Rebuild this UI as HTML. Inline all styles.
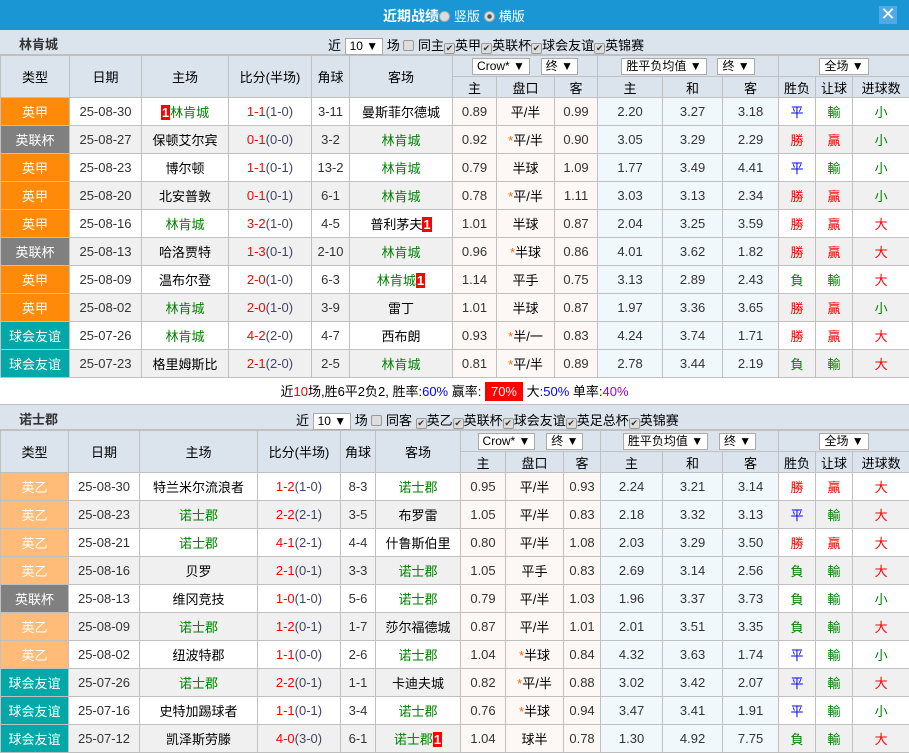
<!DOCTYPE html>
<html><head><meta charset="utf-8"><style>
*{margin:0;padding:0;box-sizing:border-box}
body{width:909px;height:754px;overflow:hidden;background:#fff;font-family:"Liberation Sans","Noto Sans CJK SC",sans-serif;font-size:13px;color:#000}
.top{height:30px;background:#1a96d4;color:#fff;font-weight:bold;font-size:14px;position:relative}
.top .t{position:absolute;left:383px;top:6px}
.top .t span{font-weight:normal;font-size:13px}
.rd{display:inline-block;width:11px;height:11px;border-radius:50%;background:#ddd;border:1px solid #aaa;vertical-align:-1px}
.rd.on{background:radial-gradient(#555 30%,#ddd 40%)}
.x{position:absolute;left:879px;top:6px;width:18px;height:18px;background:#4fa9e6;color:#fff;font-size:18px;line-height:17px;text-align:center;font-weight:normal}
.bar{height:25px;background:#dbe3ec;position:relative;border-bottom:1px solid #c0c0c0}
.bar b{position:absolute;left:19px;top:4px;font-size:13px;color:#333}
.bar .f{position:absolute;top:5px;font-size:13px;color:#000;white-space:nowrap}
.sel{display:inline-block;background:#fff;border:1px solid #aaa;padding:0 4px;height:17px;line-height:15px;font-size:12px;vertical-align:middle}
.cb{display:inline-block;width:11px;height:11px;border:1px solid #999;background:#ddd;border-radius:2px;vertical-align:-1px;font-size:9px;line-height:9px;text-align:center;color:#333}
table{border-collapse:collapse;table-layout:fixed;width:909px}
td{border:1px solid #c0c0c0;text-align:center;height:28px;font-size:13px;white-space:nowrap;overflow:hidden;padding:0}
tr.h td{background:#dbe3ec;height:21px}
tr.h td.hh{height:42px}
tr.e td{background:#f0f0f0}
td.a{background:#fdf8f5!important;color:#333}
td.o{background:#f0f8fc!important;color:#333}
td.d{color:#333}
.t1{background:#ff8a0a!important;color:#fff}
.t2{background:#808080!important;color:#fff}
.t3{background:#00a8a8!important;color:#fff}
.t4{background:#ffbb77!important;color:#fff}
.g{color:#008000}.r{color:#f00}.b{color:#00f}span.s{color:#446}
.n{background:#f00;color:#fff;font-weight:bold;padding:0 1px}
.st{color:#f60}
.sum{height:27px;text-align:center;line-height:27px;font-size:13px;border-bottom:1px solid #c0c0c0}
.sum .p{background:#f00;color:#fff;padding:2px 6px}
</style></head><body>
<div class="top"><div class="t">近期战绩<span class="rd"></span> <span>竖版</span> <span class="rd on"></span> <span>横版</span></div><div class="x">✕</div></div>
<div class="bar"><b>林肯城</b><div class="f" style="left:328px">近 <span class="sel">10 ▼</span> 场 <span class="cb"></span> 同主<span class="cb">✔</span>英甲<span class="cb">✔</span>英联杯<span class="cb">✔</span>球会友谊<span class="cb">✔</span>英锦赛</div></div>
<table>
<colgroup><col style="width:69px"><col style="width:72px"><col style="width:87px"><col style="width:83px"><col style="width:38px"><col style="width:103px"><col style="width:44px"><col style="width:58px"><col style="width:43px"><col style="width:65px"><col style="width:60px"><col style="width:56px"><col style="width:37px"><col style="width:37px"><col style="width:57px"></colgroup>
<tr class="h"><td rowspan="2" class="hh">类型</td><td rowspan="2">日期</td><td rowspan="2">主场</td><td rowspan="2">比分(半场)</td><td rowspan="2">角球</td><td rowspan="2">客场</td><td colspan="3"><span class="sel">Crow* ▼</span> &nbsp; <span class="sel">终 ▼</span></td><td colspan="3"><span class="sel">胜平负均值 ▼</span> &nbsp; <span class="sel">终 ▼</span></td><td colspan="3"><span class="sel">全场 ▼</span></td></tr>
<tr class="h"><td>主</td><td>盘口</td><td>客</td><td>主</td><td>和</td><td>客</td><td>胜负</td><td>让球</td><td>进球数</td></tr>
<tr><td class="t1">英甲</td><td class="d">25-08-30</td><td><span class="n">1</span><span class="g">林肯城</span></td><td><span class="r">1-1</span><span class="s">(1-0)</span></td><td class="d">3-11</td><td>曼斯菲尔德城</td><td class="a">0.89</td><td class="a" style="color:#000">平/半</td><td class="a">0.99</td><td class="o">2.20</td><td class="o">3.27</td><td class="o">3.18</td><td class="b">平</td><td class="g">輸</td><td class="g">小</td></tr>
<tr class="e"><td class="t2">英联杯</td><td class="d">25-08-27</td><td>保顿艾尔宾</td><td><span class="r">0-1</span><span class="s">(0-0)</span></td><td class="d">3-2</td><td class="g">林肯城</td><td class="a">0.92</td><td class="a" style="color:#000"><span class="st">*</span>平/半</td><td class="a">0.90</td><td class="o">3.05</td><td class="o">3.29</td><td class="o">2.29</td><td class="r">勝</td><td class="r">贏</td><td class="g">小</td></tr>
<tr><td class="t1">英甲</td><td class="d">25-08-23</td><td>博尔顿</td><td><span class="r">1-1</span><span class="s">(0-1)</span></td><td class="d">13-2</td><td class="g">林肯城</td><td class="a">0.79</td><td class="a" style="color:#000">半球</td><td class="a">1.09</td><td class="o">1.77</td><td class="o">3.49</td><td class="o">4.41</td><td class="b">平</td><td class="g">輸</td><td class="g">小</td></tr>
<tr class="e"><td class="t1">英甲</td><td class="d">25-08-20</td><td>北安普敦</td><td><span class="r">0-1</span><span class="s">(0-1)</span></td><td class="d">6-1</td><td class="g">林肯城</td><td class="a">0.78</td><td class="a" style="color:#000"><span class="st">*</span>平/半</td><td class="a">1.11</td><td class="o">3.03</td><td class="o">3.13</td><td class="o">2.34</td><td class="r">勝</td><td class="r">贏</td><td class="g">小</td></tr>
<tr><td class="t1">英甲</td><td class="d">25-08-16</td><td class="g">林肯城</td><td><span class="r">3-2</span><span class="s">(1-0)</span></td><td class="d">4-5</td><td>普利茅夫<span class="n">1</span></td><td class="a">1.01</td><td class="a" style="color:#000">半球</td><td class="a">0.87</td><td class="o">2.04</td><td class="o">3.25</td><td class="o">3.59</td><td class="r">勝</td><td class="r">贏</td><td class="r">大</td></tr>
<tr class="e"><td class="t2">英联杯</td><td class="d">25-08-13</td><td>哈洛贾特</td><td><span class="r">1-3</span><span class="s">(0-1)</span></td><td class="d">2-10</td><td class="g">林肯城</td><td class="a">0.96</td><td class="a" style="color:#000"><span class="st">*</span>半球</td><td class="a">0.86</td><td class="o">4.01</td><td class="o">3.62</td><td class="o">1.82</td><td class="r">勝</td><td class="r">贏</td><td class="r">大</td></tr>
<tr><td class="t1">英甲</td><td class="d">25-08-09</td><td>温布尔登</td><td><span class="r">2-0</span><span class="s">(1-0)</span></td><td class="d">6-3</td><td><span class="g">林肯城</span><span class="n">1</span></td><td class="a">1.14</td><td class="a" style="color:#000">平手</td><td class="a">0.75</td><td class="o">3.13</td><td class="o">2.89</td><td class="o">2.43</td><td class="g">負</td><td class="g">輸</td><td class="r">大</td></tr>
<tr class="e"><td class="t1">英甲</td><td class="d">25-08-02</td><td class="g">林肯城</td><td><span class="r">2-0</span><span class="s">(1-0)</span></td><td class="d">3-9</td><td>雷丁</td><td class="a">1.01</td><td class="a" style="color:#000">半球</td><td class="a">0.87</td><td class="o">1.97</td><td class="o">3.36</td><td class="o">3.65</td><td class="r">勝</td><td class="r">贏</td><td class="g">小</td></tr>
<tr><td class="t3">球会友谊</td><td class="d">25-07-26</td><td class="g">林肯城</td><td><span class="r">4-2</span><span class="s">(2-0)</span></td><td class="d">4-7</td><td>西布朗</td><td class="a">0.93</td><td class="a" style="color:#000"><span class="st">*</span>半/一</td><td class="a">0.83</td><td class="o">4.24</td><td class="o">3.74</td><td class="o">1.71</td><td class="r">勝</td><td class="r">贏</td><td class="r">大</td></tr>
<tr class="e"><td class="t3">球会友谊</td><td class="d">25-07-23</td><td>格里姆斯比</td><td><span class="r">2-1</span><span class="s">(2-0)</span></td><td class="d">2-5</td><td class="g">林肯城</td><td class="a">0.81</td><td class="a" style="color:#000"><span class="st">*</span>平/半</td><td class="a">0.89</td><td class="o">2.78</td><td class="o">3.44</td><td class="o">2.19</td><td class="g">負</td><td class="g">輸</td><td class="r">大</td></tr>
</table>
<div class="sum">近<span class="r">10</span>场,胜6平2负2, 胜率:<span class="b">60%</span> 赢率: <span class="p">70%</span> 大:<span class="b">50%</span> 单率:<span class="b" style="color:#90c">40%</span></div>
<div class="bar"><b>诺士郡</b><div class="f" style="left:296px">近 <span class="sel">10 ▼</span> 场 <span class="cb"></span> 同客 <span class="cb">✔</span>英乙<span class="cb">✔</span>英联杯<span class="cb">✔</span>球会友谊<span class="cb">✔</span>英足总杯<span class="cb">✔</span>英锦赛</div></div>
<table>
<colgroup><col style="width:68px"><col style="width:71px"><col style="width:118px"><col style="width:83px"><col style="width:35px"><col style="width:85px"><col style="width:45px"><col style="width:58px"><col style="width:37px"><col style="width:62px"><col style="width:60px"><col style="width:56px"><col style="width:37px"><col style="width:37px"><col style="width:57px"></colgroup>
<tr class="h"><td rowspan="2" class="hh">类型</td><td rowspan="2">日期</td><td rowspan="2">主场</td><td rowspan="2">比分(半场)</td><td rowspan="2">角球</td><td rowspan="2">客场</td><td colspan="3"><span class="sel">Crow* ▼</span> &nbsp; <span class="sel">终 ▼</span></td><td colspan="3"><span class="sel">胜平负均值 ▼</span> &nbsp; <span class="sel">终 ▼</span></td><td colspan="3"><span class="sel">全场 ▼</span></td></tr>
<tr class="h"><td>主</td><td>盘口</td><td>客</td><td>主</td><td>和</td><td>客</td><td>胜负</td><td>让球</td><td>进球数</td></tr>
<tr><td class="t4">英乙</td><td class="d">25-08-30</td><td>特兰米尔流浪者</td><td><span class="r">1-2</span><span class="s">(1-0)</span></td><td class="d">8-3</td><td class="g">诺士郡</td><td class="a">0.95</td><td class="a" style="color:#000">平/半</td><td class="a">0.93</td><td class="o">2.24</td><td class="o">3.21</td><td class="o">3.14</td><td class="r">勝</td><td class="r">贏</td><td class="r">大</td></tr>
<tr class="e"><td class="t4">英乙</td><td class="d">25-08-23</td><td class="g">诺士郡</td><td><span class="r">2-2</span><span class="s">(2-1)</span></td><td class="d">3-5</td><td>布罗雷</td><td class="a">1.05</td><td class="a" style="color:#000">平/半</td><td class="a">0.83</td><td class="o">2.18</td><td class="o">3.32</td><td class="o">3.13</td><td class="b">平</td><td class="g">輸</td><td class="r">大</td></tr>
<tr><td class="t4">英乙</td><td class="d">25-08-21</td><td class="g">诺士郡</td><td><span class="r">4-1</span><span class="s">(2-1)</span></td><td class="d">4-4</td><td>什鲁斯伯里</td><td class="a">0.80</td><td class="a" style="color:#000">平/半</td><td class="a">1.08</td><td class="o">2.03</td><td class="o">3.29</td><td class="o">3.50</td><td class="r">勝</td><td class="r">贏</td><td class="r">大</td></tr>
<tr class="e"><td class="t4">英乙</td><td class="d">25-08-16</td><td>贝罗</td><td><span class="r">2-1</span><span class="s">(0-1)</span></td><td class="d">3-3</td><td class="g">诺士郡</td><td class="a">1.05</td><td class="a" style="color:#000">平手</td><td class="a">0.83</td><td class="o">2.69</td><td class="o">3.14</td><td class="o">2.56</td><td class="g">負</td><td class="g">輸</td><td class="r">大</td></tr>
<tr><td class="t2">英联杯</td><td class="d">25-08-13</td><td>维冈竞技</td><td><span class="r">1-0</span><span class="s">(1-0)</span></td><td class="d">5-6</td><td class="g">诺士郡</td><td class="a">0.79</td><td class="a" style="color:#000">平/半</td><td class="a">1.03</td><td class="o">1.96</td><td class="o">3.37</td><td class="o">3.73</td><td class="g">負</td><td class="g">輸</td><td class="g">小</td></tr>
<tr class="e"><td class="t4">英乙</td><td class="d">25-08-09</td><td class="g">诺士郡</td><td><span class="r">1-2</span><span class="s">(0-1)</span></td><td class="d">1-7</td><td>莎尔福德城</td><td class="a">0.87</td><td class="a" style="color:#000">平/半</td><td class="a">1.01</td><td class="o">2.01</td><td class="o">3.51</td><td class="o">3.35</td><td class="g">負</td><td class="g">輸</td><td class="r">大</td></tr>
<tr><td class="t4">英乙</td><td class="d">25-08-02</td><td>纽波特郡</td><td><span class="r">1-1</span><span class="s">(0-0)</span></td><td class="d">2-6</td><td class="g">诺士郡</td><td class="a">1.04</td><td class="a" style="color:#000"><span class="st">*</span>半球</td><td class="a">0.84</td><td class="o">4.32</td><td class="o">3.63</td><td class="o">1.74</td><td class="b">平</td><td class="g">輸</td><td class="g">小</td></tr>
<tr class="e"><td class="t3">球会友谊</td><td class="d">25-07-26</td><td class="g">诺士郡</td><td><span class="r">2-2</span><span class="s">(0-1)</span></td><td class="d">1-1</td><td>卡迪夫城</td><td class="a">0.82</td><td class="a" style="color:#000"><span class="st">*</span>平/半</td><td class="a">0.88</td><td class="o">3.02</td><td class="o">3.42</td><td class="o">2.07</td><td class="b">平</td><td class="g">輸</td><td class="r">大</td></tr>
<tr><td class="t3">球会友谊</td><td class="d">25-07-16</td><td>史特加踢球者</td><td><span class="r">1-1</span><span class="s">(0-1)</span></td><td class="d">3-4</td><td class="g">诺士郡</td><td class="a">0.76</td><td class="a" style="color:#000"><span class="st">*</span>半球</td><td class="a">0.94</td><td class="o">3.47</td><td class="o">3.41</td><td class="o">1.91</td><td class="b">平</td><td class="g">輸</td><td class="g">小</td></tr>
<tr class="e"><td class="t3">球会友谊</td><td class="d">25-07-12</td><td>凯泽斯劳滕</td><td><span class="r">4-0</span><span class="s">(3-0)</span></td><td class="d">6-1</td><td><span class="g">诺士郡</span><span class="n">1</span></td><td class="a">1.04</td><td class="a" style="color:#000">球半</td><td class="a">0.78</td><td class="o">1.30</td><td class="o">4.92</td><td class="o">7.75</td><td class="g">負</td><td class="g">輸</td><td class="r">大</td></tr>
</table>
</body></html>
